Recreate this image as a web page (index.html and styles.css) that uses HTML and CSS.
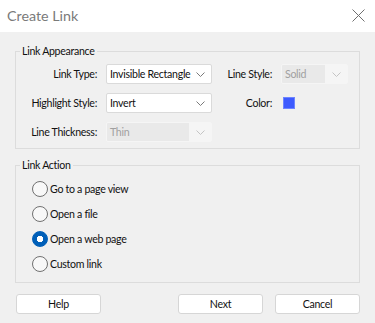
FILE: index.html
```html
<!DOCTYPE html>
<html>
<head>
    <title>Create Link</title>
    <link rel="stylesheet" href="styles.css">
</head>
<body>
    <div class="dialog">
        <div class="title-bar">
            <span class="title">Create Link</span>
            <svg class="close" width="13" height="13" viewBox="0 0 13 13">
                <path d="M0.5 0.5 L12.5 12.5 M12.5 0.5 L0.5 12.5" stroke="#6f6f6f" stroke-width="1" fill="none"/>
            </svg>
        </div>

        <div class="content">
            <!-- Appearance group -->
            <fieldset class="group">
                <legend>Link Appearance</legend>
                <div class="appearance">
                    <label class="field-label">Link Type:</label>
                    <div class="combo">
                        <span class="combo-text">Invisible Rectangle</span>
                        <svg class="chevron" width="9" height="5" viewBox="0 0 9 5"><path d="M0.5 0.5 L4.5 4.5 L8.5 0.5" stroke="#7a7a7a" fill="none"/></svg>
                    </div>
                    <label class="field-label">Line Style:</label>
                    <div class="combo disabled">
                        <span class="combo-text">Solid</span>
                        <span class="combo-arrow">
                            <svg class="chevron" width="9" height="5" viewBox="0 0 9 5"><path d="M0.5 0.5 L4.5 4.5 L8.5 0.5" stroke="#c4c4c4" fill="none"/></svg>
                        </span>
                    </div>

                    <label class="field-label">Highlight Style:</label>
                    <div class="combo">
                        <span class="combo-text">Invert</span>
                        <svg class="chevron" width="9" height="5" viewBox="0 0 9 5"><path d="M0.5 0.5 L4.5 4.5 L8.5 0.5" stroke="#7a7a7a" fill="none"/></svg>
                    </div>
                    <label class="field-label">Color:</label>
                    <div class="swatch-cell"><span class="swatch"></span></div>

                    <label class="field-label">Line Thickness:</label>
                    <div class="combo disabled">
                        <span class="combo-text">Thin</span>
                        <span class="combo-arrow">
                            <svg class="chevron" width="9" height="5" viewBox="0 0 9 5"><path d="M0.5 0.5 L4.5 4.5 L8.5 0.5" stroke="#c4c4c4" fill="none"/></svg>
                        </span>
                    </div>
                </div>
            </fieldset>

            <!-- Action group -->
            <fieldset class="group action">
                <legend>Link Action</legend>
                <div class="radio-list">
                    <label class="radio-row"><input type="radio" name="action"> Go to a page view</label>
                    <label class="radio-row"><input type="radio" name="action"> Open a file</label>
                    <label class="radio-row"><input type="radio" name="action" checked> Open a web page</label>
                    <label class="radio-row"><input type="radio" name="action"> Custom link</label>
                </div>
            </fieldset>

            <div class="buttons">
                <button>Help</button>
                <div class="right-buttons">
                    <button>Next</button>
                    <button>Cancel</button>
                </div>
            </div>
        </div>
    </div>
</body>
</html>
```

FILE: styles.css
```css
body {
    margin: 0;
    width: 375px;
    height: 323px;
    background-color: #f0f0f0;
    font-family: Lato, "Noto Sans", sans-serif;
    font-size: 10.6px;
    letter-spacing: -0.3px;
    color: #111;
    overflow: hidden;
}

.title-bar {
    height: 32px;
    background-color: #fff;
    display: flex;
    align-items: center;
    justify-content: space-between;
    padding: 0 10px 0 7px;
}

.title {
    font-size: 14.3px;
    letter-spacing: 0;
    color: #7a7a7a;
    margin-top: -2px;
}

.close {
    display: block;
    margin-top: -2px;
}

.content {
    padding: 0 15px;
}

.group {
    margin: 11px 0 0 0;
    padding: 5px 0 6px 0;
    border: 1px solid #dcdcdc;
    line-height: 16px;
}

.group legend {
    margin-left: 4px;
    padding: 0 2px;
    line-height: 16px;
}

.appearance {
    display: grid;
    grid-template-columns: 81px 106px 51px 67px;
    grid-auto-rows: 20px;
    column-gap: 9px;
    row-gap: 9px;
}

.field-label {
    text-align: right;
    align-self: center;
    white-space: nowrap;
}

.combo {
    display: flex;
    align-items: center;
    justify-content: space-between;
    background-color: #fff;
    border: 1px solid #dadada;
    border-radius: 2px;
    padding: 0 0 0 3px;
    white-space: nowrap;
    overflow: hidden;
}

.combo .chevron {
    margin-right: 6px;
    flex: none;
}

.combo.disabled {
    background-color: #f5f5f5;
    border-color: #f5f5f5;
    color: #a0a0a0;
    padding: 0;
}

.combo.disabled .combo-text {
    flex: 1;
    background-color: #e9e9e9;
    height: 100%;
    line-height: 18px;
    padding-left: 3px;
}

.combo-arrow {
    width: 22px;
    height: 100%;
    display: flex;
    align-items: center;
    justify-content: center;
}

.combo-arrow .chevron {
    margin: 0;
}

.swatch-cell {
    display: flex;
    align-items: center;
    margin-left: 2px;
}

.swatch {
    width: 10px;
    height: 10px;
    background-color: #3d5afe;
    border: 1px solid #6d84ff;
}

.action {
    margin-top: 8px;
    padding: 8px 0 10px 0;
}

.radio-list {
    display: flex;
    flex-direction: column;
    gap: 9px;
    padding-left: 16px;
}

.radio-row {
    display: flex;
    align-items: center;
    height: 16px;
    gap: 2px;
}

.radio-row input {
    appearance: none;
    margin: 0;
    width: 16px;
    height: 16px;
    border: 1px solid #707070;
    border-radius: 50%;
    background-color: #f8f8f8;
    box-sizing: border-box;
}

.radio-row input:checked {
    border-color: #005fb8;
    background-image: radial-gradient(circle, #fff 0 3px, #005fb8 3.5px);
}

.buttons {
    margin-top: 11px;
    display: flex;
    justify-content: space-between;
    padding-left: 1px;
}

.right-buttons {
    display: flex;
    gap: 12px;
}

button {
    width: 85px;
    height: 20px;
    background-color: #fff;
    border: 1px solid #d6d6d6;
    border-radius: 3px;
    font-family: inherit;
    font-size: 10.6px;
    letter-spacing: -0.3px;
    color: #111;
    padding: 0;
    line-height: 18px;
}
```
